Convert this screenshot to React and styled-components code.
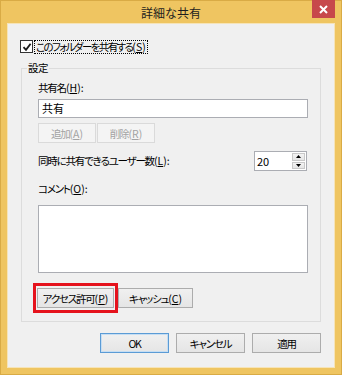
import React from "react"
import styled, { createGlobalStyle } from "styled-components"

const GlobalStyle = createGlobalStyle`
  html, body {
    margin: 0;
    padding: 0;
    background: #f0f0f0;
  }
  body {
    font-family: "Noto Sans CJK JP", "Noto Sans", sans-serif;
    font-feature-settings: "palt";
    font-size: 10.5px;
    color: #000;
  }
`

function CheckIcon() {
  return (
    <svg width="10" height="10" viewBox="0 0 10 10">
      <path d="M1.5 5.2 L4 7.8 L8.6 1.8" fill="none" stroke="#1a1a1a" strokeWidth="1.8" />
    </svg>
  )
}

function Arrow({ up }) {
  return (
    <svg width="5" height="3" viewBox="0 0 5 3">
      <path d={up ? "M0 3 L2.5 0 L5 3 Z" : "M0 0 L5 0 L2.5 3 Z"} fill="#000" />
    </svg>
  )
}

function Key({ k, colon }) {
  return (
    <KeyText>
      (<u>{k}</u>){colon ? ":" : ""}
    </KeyText>
  )
}

function App() {
  return (
    <>
      <GlobalStyle />
      <Window>
        <TitleBar>
          <span />
          <Title>詳細な共有</Title>
          <CloseButton>
            <svg width="9" height="9" viewBox="0 0 9 9">
              <path d="M1 1 L8 8 M8 1 L1 8" stroke="#fff" strokeWidth="2" />
            </svg>
          </CloseButton>
        </TitleBar>
        <Client>
          <CheckRow>
            <CheckBox>
              <CheckIcon />
            </CheckBox>
            <FocusLabel>
              このフォルダーを共有する<Key k="S" />
            </FocusLabel>
          </CheckRow>

          <Group>
            <legend>設定</legend>
            <GroupBody>
              <Label>
                共有名<Key k="H" colon />
              </Label>
              <TextBox>共有</TextBox>

              <ButtonRow $top={5}>
                <Button $w={58} disabled>
                  追加<Key k="A" />
                </Button>
                <Button $w={58} disabled>
                  削除<Key k="R" />
                </Button>
              </ButtonRow>

              <SpinRow>
                <Label>
                  同時に共有できるユーザー数<Key k="L" colon />
                </Label>
                <Spinner>
                  <SpinValue>20</SpinValue>
                  <SpinButtons>
                    <SpinButton>
                      <Arrow up />
                    </SpinButton>
                    <SpinButton>
                      <Arrow />
                    </SpinButton>
                  </SpinButtons>
                </Spinner>
              </SpinRow>

              <Label $top={11}>
                コメント<Key k="O" colon />
              </Label>
              <CommentBox />

              <PermRow>
                <Highlight>
                  <Button $w={77}>
                    アクセス許可<Key k="P" />
                  </Button>
                </Highlight>
                <Button $w={75}>
                  キャッシュ<Key k="C" />
                </Button>
              </PermRow>
            </GroupBody>
          </Group>

          <DialogButtons>
            <Button $w={69} $default>
              OK
            </Button>
            <Button $w={69}>キャンセル</Button>
            <Button $w={69}>適用</Button>
          </DialogButtons>
        </Client>
      </Window>
    </>
  )
}

const Window = styled.div`
  width: 342px;
  height: 375px;
  box-sizing: border-box;
  border: 1px solid #d9ab45;
  background: #efc561;
  display: flex;
  flex-direction: column;
`

const TitleBar = styled.div`
  height: 22px;
  padding: 0 6px;
  display: grid;
  grid-template-columns: 1fr auto 1fr;
  flex-shrink: 0;
`

const Title = styled.div`
  font-size: 12px;
  line-height: 22px;
  color: #1e1e1e;
  padding-top: 1px;
`

const CloseButton = styled.div`
  justify-self: end;
  width: 23px;
  height: 18px;
  margin-top: -1px;
  background: #c7484b;
  display: flex;
  align-items: center;
  justify-content: center;
`

const Client = styled.div`
  flex: 1;
  margin: 0 6px 6px;
  border: 1px solid #f6e4b8;
  background: #f0f0f0;
  display: flex;
  flex-direction: column;
`

const KeyText = styled.span`
  letter-spacing: 0;
`

const CheckRow = styled.div`
  margin: 16px 0 0 12px;
  height: 13px;
  display: flex;
  align-items: center;
  gap: 1px;
`

const CheckBox = styled.div`
  width: 11px;
  height: 11px;
  border: 1px solid #333;
  background: #fff;
  display: flex;
  align-items: center;
  justify-content: center;
`

const FocusLabel = styled.span`
  border: 1px dotted #000;
  padding: 0 1px;
  line-height: 12px;
  letter-spacing: -1.6px;
  white-space: nowrap;
`

const Group = styled.fieldset`
  margin: 8px 0 0 13px;
  width: 300px;
  box-sizing: border-box;
  padding: 0;
  border: 1px solid #dcdcdc;

  legend {
    margin-left: 5px;
    padding: 0 1px;
    line-height: 14px;
    letter-spacing: -0.5px;
  }
`

const GroupBody = styled.div`
  padding: 6px 12px 8px 16px;
  display: flex;
  flex-direction: column;
`

const Label = styled.div`
  line-height: 14px;
  margin-top: ${(p) => p.$top || 0}px;
  letter-spacing: -1.2px;
  white-space: nowrap;
`

const TextBox = styled.div`
  margin-top: 4px;
  height: 19px;
  box-sizing: border-box;
  border: 1px solid #abadb3;
  background: #fff;
  padding: 0 3px;
  line-height: 17px;
  font-size: 11px;
`

const ButtonRow = styled.div`
  display: flex;
  gap: 1px;
  margin-top: ${(p) => p.$top || 0}px;
`

const Button = styled.button`
  width: ${(p) => p.$w}px;
  height: 20px;
  box-sizing: border-box;
  padding: 0;
  font-family: inherit;
  font-feature-settings: "palt";
  font-size: 10.5px;
  letter-spacing: -1.2px;
  color: #000;
  border: 1px solid ${(p) => (p.$default ? "#5b9bd5" : "#acacac")};
  background: linear-gradient(#f0f0f0, #e5e5e5);
  box-shadow: ${(p) => (p.$default ? "inset 0 0 0 1px #c6def3" : "none")};
  white-space: nowrap;

  &:disabled {
    color: #a3a3a3;
    border-color: #dadada;
    background: #f4f4f4;
  }
`

const SpinRow = styled.div`
  margin-top: 8px;
  display: flex;
  align-items: center;
  justify-content: space-between;
  padding-right: 1px;
`

const Spinner = styled.div`
  width: 53px;
  height: 20px;
  box-sizing: border-box;
  border: 1px solid #abadb3;
  background: #fff;
  display: flex;
`

const SpinValue = styled.div`
  flex: 1;
  padding-left: 2px;
  line-height: 18px;
  font-size: 11px;
`

const SpinButtons = styled.div`
  width: 13px;
  padding: 1px 1px 1px 0;
  display: flex;
  flex-direction: column;
  gap: 1px;
`

const SpinButton = styled.div`
  flex: 1;
  border: 1px solid #c9c9c9;
  background: linear-gradient(#f3f3f3, #e6e6e6);
  display: flex;
  align-items: center;
  justify-content: center;
`

const CommentBox = styled.div`
  margin-top: 9px;
  height: 68px;
  box-sizing: border-box;
  border: 1px solid #abadb3;
  background: #fff;
`

const PermRow = styled.div`
  margin: 10px 0 0 -5px;
  display: flex;
  align-items: center;
`

const Highlight = styled.div`
  border: 3px solid #e5121c;
  padding: 2px 1px;
  display: flex;
`

const DialogButtons = styled.div`
  margin-top: 11px;
  padding-right: 13px;
  display: flex;
  justify-content: flex-end;
  gap: 7px;
`

export default App
